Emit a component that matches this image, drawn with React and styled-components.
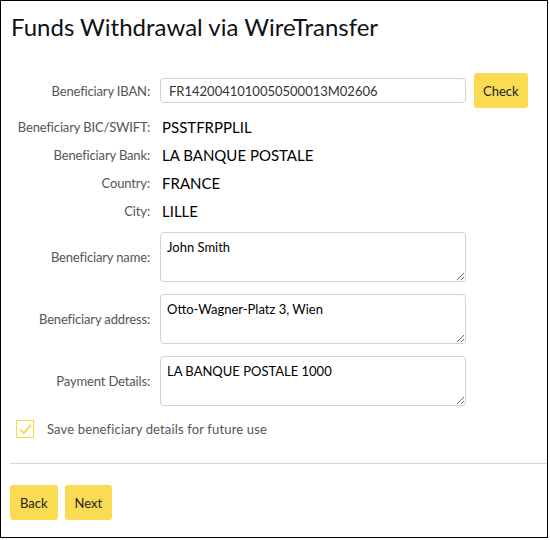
import React from "react";
import styled, { createGlobalStyle } from "styled-components";

const Global = createGlobalStyle`
  html, body { margin: 0; padding: 0; background: #fff; }
  body { font-family: Lato, "Open Sans", sans-serif; }
  * { box-sizing: border-box; }
`;

const Frame = styled.div`
  width: 548px;
  height: 538px;
  border: 1px solid #000;
  display: flex;
  flex-direction: column;
  padding-left: 9px;
`;

const Title = styled.h1`
  margin: 0;
  padding: 11px 0 0 1px;
  height: 72px;
  font-size: 24px;
  line-height: 30px;
  font-weight: 400;
  color: #111;
`;

const Row = styled.div`
  display: grid;
  grid-template-columns: 140px 1fr;
  column-gap: 10px;
  align-items: center;
  height: ${(p) => p.$h}px;
  margin-top: ${(p) => p.$mt || 0}px;
  padding-right: 19px;
`;

const Label = styled.label`
  text-align: right;
  font-size: 13px;
  letter-spacing: -0.15px;
  color: #555;
`;

const Value = styled.div`
  font-size: 15px;
  color: #000;
  padding-left: 2px;
`;

const Field = styled.div`
  display: flex;
  align-items: center;
  gap: 8px;
`;

const Input = styled.input`
  width: 306px;
  height: 25px;
  border: 1px solid #d2d2d2;
  border-radius: 4px;
  padding: 0 8px;
  font-family: inherit;
  font-size: 13px;
  color: #333;
  outline: none;
`;

const Button = styled.button`
  background: #fadb52;
  border: none;
  border-radius: 3px;
  height: 35px;
  padding: 0 ${(p) => p.$px || 10}px;
  font-family: inherit;
  font-size: 13px;
  color: #222;
  cursor: pointer;
`;

const TextArea = styled.textarea`
  width: 306px;
  height: 50px;
  border: 1px solid #d2d2d2;
  border-radius: 4px;
  padding: 6px 6px;
  font-family: inherit;
  font-size: 13px;
  color: #000;
  resize: vertical;
  outline: none;
`;

const CheckRow = styled.label`
  display: flex;
  align-items: center;
  gap: 13px;
  margin-top: 14px;
  padding-left: 6px;
  font-size: 13px;
  letter-spacing: 0.15px;
  color: #555;
`;

const Box = styled.span`
  width: 18px;
  height: 18px;
  border: 1px solid #f7d94c;
  display: flex;
  align-items: center;
  justify-content: center;
`;

const Divider = styled.hr`
  margin: 25px 0 0 0;
  border: none;
  border-top: 1px solid #d6d6d6;
  height: 0;
`;

const Actions = styled.div`
  display: flex;
  gap: 7px;
  margin-top: 21px;
`;

export default function App() {
  return (
    <>
      <Global />
      <Frame>
        <Title>Funds Withdrawal via WireTransfer</Title>
        <Row $h={35}>
          <Label>Beneficiary IBAN:</Label>
          <Field>
            <Input defaultValue="FR1420041010050500013M02606" />
            <Button $px={9}>Check</Button>
          </Field>
        </Row>
        <Row $h={28} $mt={5}>
          <Label>Beneficiary BIC/SWIFT:</Label>
          <Value>PSSTFRPPLIL</Value>
        </Row>
        <Row $h={28}>
          <Label>Beneficiary Bank:</Label>
          <Value>LA BANQUE POSTALE</Value>
        </Row>
        <Row $h={28}>
          <Label>Country:</Label>
          <Value>FRANCE</Value>
        </Row>
        <Row $h={28}>
          <Label>City:</Label>
          <Value>LILLE</Value>
        </Row>
        <Row $h={50} $mt={7}>
          <Label>Beneficiary name:</Label>
          <TextArea defaultValue="John Smith" />
        </Row>
        <Row $h={50} $mt={12}>
          <Label>Beneficiary address:</Label>
          <TextArea defaultValue="Otto-Wagner-Platz 3, Wien" />
        </Row>
        <Row $h={50} $mt={12}>
          <Label>Payment Details:</Label>
          <TextArea defaultValue="LA BANQUE POSTALE 1000" />
        </Row>
        <CheckRow>
          <Box>
            <svg width="13" height="11" viewBox="0 0 13 11">
              <path d="M1.5 6 L4.8 9.2 L11.5 1.5" fill="none" stroke="#f7d94c" strokeWidth="2" strokeLinecap="round" strokeLinejoin="round" />
            </svg>
          </Box>
          Save beneficiary details for future use
        </CheckRow>
        <Divider />
        <Actions>
          <Button $px={10}>Back</Button>
          <Button $px={10}>Next</Button>
        </Actions>
      </Frame>
    </>
  );
}
